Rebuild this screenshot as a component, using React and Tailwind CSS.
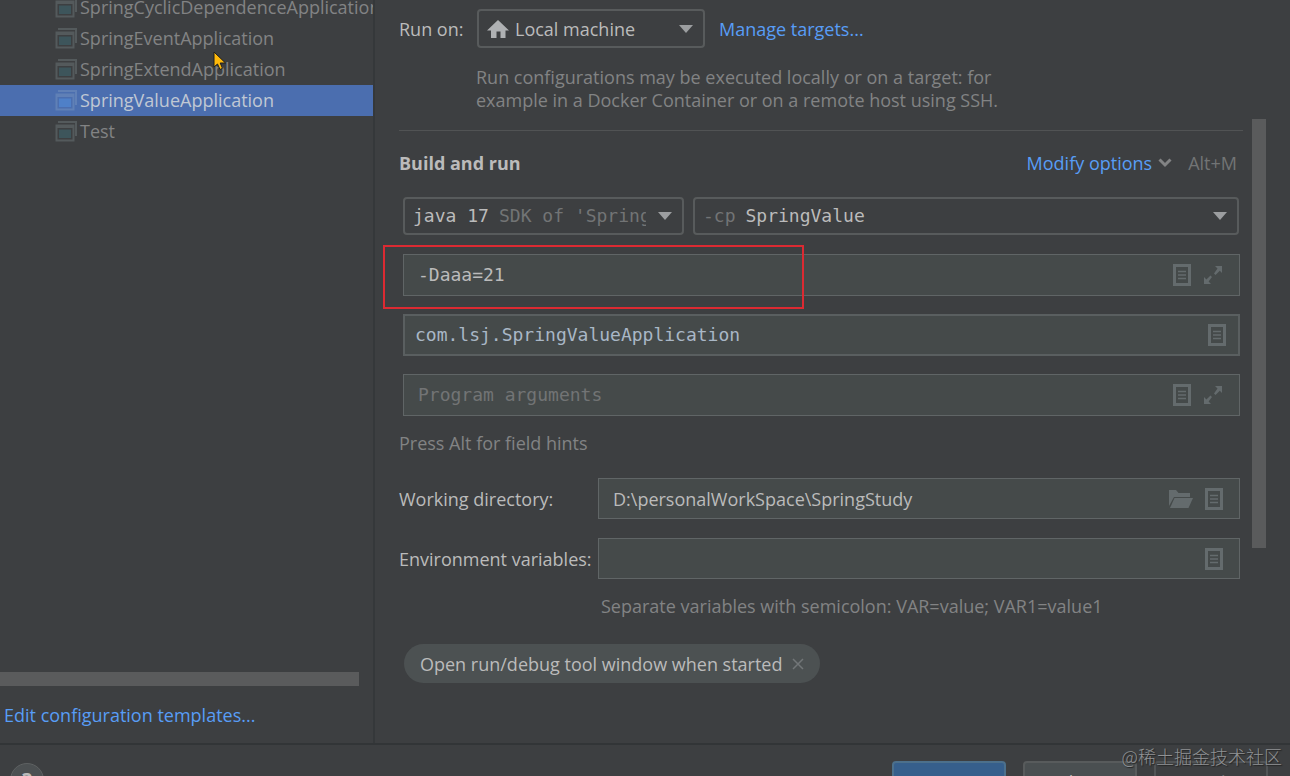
const configs = [
  { name: "SpringCyclicDependenceApplication" },
  { name: "SpringEventApplication" },
  { name: "SpringExtendApplication" },
  { name: "SpringValueApplication", selected: true },
  { name: "Test" },
];

const mono = "font-['DejaVu_Sans_Mono','Liberation_Mono',monospace]";

function AppIcon({ selected }) {
  const line = selected ? "#6080b6" : "#545a5c";
  return (
    <svg width="22" height="22" viewBox="0 0 22 22" className="shrink-0" aria-hidden="true">
      <path d="M3 2H21V16" fill="none" stroke={line} strokeWidth="2" />
      <path d="M1.5 5.5H18.5V20.5H1.5Z" fill="none" stroke={line} strokeWidth="2" />
      <path d="M1 6.5H19" stroke={line} strokeWidth="3" />
      <rect x="4" y="9.5" width="12" height="8.5" fill={selected ? "#4f80c8" : "#3d555b"} />
    </svg>
  );
}

function Caret() {
  return (
    <svg width="14" height="8" viewBox="0 0 14 8" className="pointer-events-none shrink-0" aria-hidden="true">
      <path d="M0 0H14L7 8Z" fill="#9c9ea0" />
    </svg>
  );
}

function DocIcon() {
  return (
    <svg width="18" height="22" viewBox="0 0 18 22" aria-hidden="true">
      <rect x="1.5" y="1.5" width="15" height="19" fill="none" stroke="#646b6d" strokeWidth="3" />
      <path d="M5 7.5H13M5 11H13M5 14.5H13" stroke="#646b6d" strokeWidth="1.5" />
    </svg>
  );
}

function ExpandIcon() {
  return (
    <svg width="20" height="20" viewBox="0 0 20 20" aria-hidden="true">
      <path d="M12 1H19V8L16.8 5.8L12.5 10L11 8.5L14.5 3.6ZM1 12L3.4 14.4L7.5 10.5L9 12L5.6 16.6L8 19H1Z" fill="#646b6d" />
    </svg>
  );
}

function FolderIcon() {
  return (
    <svg width="24" height="18" viewBox="0 0 24 18" aria-hidden="true">
      <path d="M0 0H7L9.5 3H21V7H5L0 16Z" fill="#646b6d" />
      <path d="M5.5 8H24L19.5 18H1Z" fill="#646b6d" />
    </svg>
  );
}

function IconButton({ label, children }) {
  return (
    <button type="button" aria-label={label} className="shrink-0">
      {children}
    </button>
  );
}

export default function App() {
  return (
    <div className="relative flex h-screen flex-col overflow-hidden bg-[#3d3f41] font-['Open_Sans','Noto_Sans_CJK_SC',sans-serif] text-lg/6 text-[#bbbbbb]">
      <div className="flex min-h-0 flex-1">
        <aside className="relative flex w-[375px] shrink-0 flex-col border-r-2 border-[#35383a]">
          <ul className="-mt-2 min-h-0 flex-1 overflow-hidden">
            {configs.map(c => (
              <li key={c.name}>
                <button
                  type="button"
                  className={`flex h-[31px] w-full items-center gap-[3px] whitespace-nowrap pb-0.5 pl-[55px] text-left ${
                    c.selected ? "bg-[#4b6eaf] text-[#c0c8d4]" : "text-[#828384]"
                  }`}
                >
                  <AppIcon selected={c.selected} />
                  {c.name}
                </button>
              </li>
            ))}
          </ul>
          <div className="mr-3.5 h-3.5 bg-[#5a5b5c]" />
          <a href="#templates" className="mt-[17px] mb-4 pl-1 text-[#589df6]">
            Edit configuration templates...
          </a>

          {/* Mouse pointer */}
          <svg className="absolute top-[51px] left-[213px]" width="14" height="20" viewBox="0 0 14 20" aria-hidden="true">
            <path d="M1 1V16L4.5 13L7 18.5L9.5 17.3L7.2 12H12.5Z" fill="#ffb90a" stroke="#1e1e1e" strokeWidth="1" />
          </svg>
        </aside>

        <main className="flex min-w-0 flex-1 pr-6 pl-6">
          <div className="min-w-0 flex-1 pt-[9px]">
            <div className="flex items-center">
              <label htmlFor="run-on" className="w-[78px] shrink-0">Run on:</label>
              <div className="flex h-[39px] w-[228px] items-center rounded border-2 border-[#585b5c] pr-2.5 pl-2">
                <svg width="22" height="18" viewBox="0 0 22 18" className="mr-1.5 shrink-0" aria-hidden="true">
                  <path d="M11 0L22 10.5H18.5V18H13.5V11.5H9.5V18H4V10.5H0Z" fill="#afb1b3" />
                </svg>
                <select id="run-on" className="min-w-0 flex-1 appearance-none outline-none">
                  <option>Local machine</option>
                </select>
                <Caret />
              </div>
              <a href="#targets" className="ml-3.5 text-[#589df6]">Manage targets...</a>
            </div>
            <p className="mt-[18px] ml-[77px] max-w-[530px] text-lg/[23px] text-[#828384]">
              Run configurations may be executed locally or on a target: for
              <br />
              example in a Docker Container or on a remote host using SSH.
            </p>
            <hr className="mt-[18px] border-[#515354]" />

            <div className="mt-5 flex items-center pr-1.5">
              <h2 className="flex-1 font-bold">Build and run</h2>
              <button type="button" className="flex items-center gap-1.5 text-[#589df6]">
                Modify options
                <svg width="14" height="10" viewBox="0 0 14 10" aria-hidden="true">
                  <path d="M1.5 1.5L7 7L12.5 1.5" fill="none" stroke="#828384" strokeWidth="3" />
                </svg>
              </button>
              <span className="ml-4 text-[#727475]">Alt+M</span>
            </div>

            <div className={`mt-[22px] ml-1 flex gap-[9px] pr-1 ${mono}`}>
              <div className="flex h-[38px] w-[281px] shrink-0 items-center rounded border-2 border-[#585b5c] pr-2.5 pl-2">
                <select aria-label="Java version" className="shrink-0 appearance-none outline-none">
                  <option>java 17</option>
                </select>
                <span className="mr-3 ml-2.5 min-w-0 flex-1 overflow-hidden whitespace-nowrap text-[#727475]">
                  SDK of 'Spring'
                </span>
                <Caret />
              </div>
              <div className="flex h-[38px] min-w-0 flex-1 items-center rounded border-2 border-[#585b5c] pr-2.5 pl-2">
                <label htmlFor="classpath" className="mr-2.5 text-[#727475]">-cp</label>
                <select id="classpath" className="min-w-0 flex-1 appearance-none outline-none">
                  <option>SpringValue</option>
                </select>
                <Caret />
              </div>
            </div>

            <div className={`mt-[19px] mr-[3px] ml-1 flex flex-col gap-[18px] ${mono}`}>
              <div className="relative">
                <div className="flex h-[42px] items-center gap-3 border border-[#606566] bg-[#454a4a] pr-4 pl-3.5">
                  <input aria-label="VM options" defaultValue="-Daaa=21" className="min-w-0 flex-1 outline-none" />
                  <IconButton label="Insert macros"><DocIcon /></IconButton>
                  <IconButton label="Expand"><ExpandIcon /></IconButton>
                </div>
                <div className="pointer-events-none absolute -top-[9px] -left-5 h-16 w-[421px] border-2 border-[#dc2a32]" />
              </div>
              <div className="flex h-[42px] items-center border-2 border-[#5a5f60] bg-[#454a4a] pr-3 pl-2.5">
                <input
                  aria-label="Main class"
                  defaultValue="com.lsj.SpringValueApplication"
                  className="min-w-0 flex-1 text-[#a9b7c6] outline-none"
                />
                <IconButton label="Browse class"><DocIcon /></IconButton>
              </div>
              <div className="flex h-[42px] items-center gap-3 border border-[#606566] bg-[#454a4a] pr-4 pl-3.5">
                <input
                  aria-label="Program arguments"
                  placeholder="Program arguments"
                  className="min-w-0 flex-1 outline-none placeholder:text-[#727475]"
                />
                <IconButton label="Insert macros"><DocIcon /></IconButton>
                <IconButton label="Expand"><ExpandIcon /></IconButton>
              </div>
            </div>
            <p className="mt-[15px] text-[#828384]">Press Alt for field hints</p>

            <div className="mt-[23px] mr-[3px] flex items-center">
              <label htmlFor="workdir" className="w-[199px] shrink-0">Working directory:</label>
              <div className="flex h-[41px] min-w-0 flex-1 items-center gap-3 border border-[#606566] bg-[#454a4a] pr-4 pl-3.5">
                <input id="workdir" defaultValue="D:\personalWorkSpace\SpringStudy" className="min-w-0 flex-1 outline-none" />
                <IconButton label="Browse folder"><FolderIcon /></IconButton>
                <IconButton label="Insert macros"><DocIcon /></IconButton>
              </div>
            </div>
            <div className="mt-[19px] mr-[3px] flex items-center">
              <label htmlFor="env" className="w-[199px] shrink-0">Environment variables:</label>
              <div className="flex h-[41px] min-w-0 flex-1 items-center border border-[#606566] bg-[#454a4a] pr-4 pl-3.5">
                <input id="env" className="min-w-0 flex-1 outline-none" />
                <IconButton label="Edit variables"><DocIcon /></IconButton>
              </div>
            </div>
            <p className="mt-[15px] ml-[202px] text-[#828384]">
              Separate variables with semicolon: VAR=value; VAR1=value1
            </p>

            <div className="mt-[26px] ml-[5px] inline-flex h-[39px] items-center gap-2.5 rounded-full bg-[#4c5152] px-4">
              Open run/debug tool window when started
              <button type="button" aria-label="Remove option">
                <svg width="12" height="12" viewBox="0 0 12 12" aria-hidden="true">
                  <path d="M1 1L11 11M11 1L1 11" stroke="#727678" strokeWidth="1.5" />
                </svg>
              </button>
            </div>
          </div>
          <div className="mt-[119px] ml-[9px] h-[429px] w-3.5 shrink-0 bg-[#5a5b5c]" />
        </main>
      </div>

      <footer className="flex h-[33px] shrink-0 items-start overflow-hidden border-t-2 border-[#323537] pt-4 pr-[22px] pl-2.5">
        <button type="button" className="mt-0.5 size-[34px] shrink-0 rounded-full border border-[#5e6162] bg-[#4c5052] text-xl/7 font-bold">
          ?
        </button>
        <div className="ml-auto flex shrink-0 gap-[17px]">
          <button type="button" className="h-[42px] w-[114px] rounded border-2 border-[#4c708c] bg-[#365f8c]">OK</button>
          <button type="button" className="h-[42px] w-[114px] rounded border-2 border-[#585b5c] bg-[#4a4f51]">Close</button>
          <button type="button" disabled className="h-[42px] w-[114px] rounded border-2 border-[#515456] text-[#727475]">Apply</button>
        </div>
      </footer>

      <span className="pointer-events-none absolute right-2 bottom-2 font-['Noto_Sans_CJK_SC',sans-serif] font-light text-[#909294] [text-shadow:1px_1px_1px_#222]">
        @稀土掘金技术社区
      </span>
    </div>
  );
}
